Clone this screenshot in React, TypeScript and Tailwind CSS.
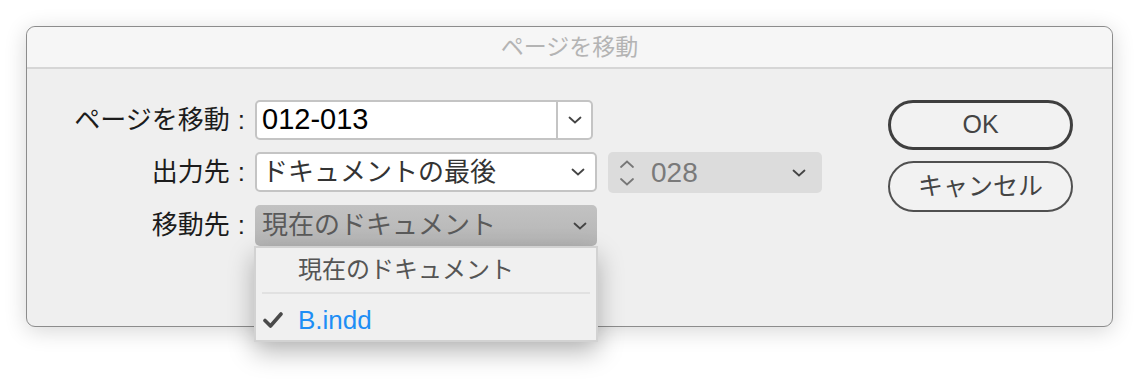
import React from "react";

const font = "font-['Liberation_Sans','Noto_Sans_CJK_JP',sans-serif]";

const Chevron: React.FC<{ className?: string }> = ({ className }) => (
  <svg width="14" height="8" viewBox="0 0 14 8" className={className}>
    <path d="M1.5 1.5 L7 6.5 L12.5 1.5" fill="none" stroke="#444" strokeWidth="1.8" strokeLinecap="round" />
  </svg>
);

const Stepper: React.FC = () => (
  <svg width="16" height="28" viewBox="0 0 16 28">
    <path d="M2 8 L8 2.5 L14 8" fill="none" stroke="#777" strokeWidth="1.8" strokeLinecap="round" />
    <path d="M2 20 L8 25.5 L14 20" fill="none" stroke="#777" strokeWidth="1.8" strokeLinecap="round" />
  </svg>
);

const Label: React.FC<{ text: string }> = ({ text }) => (
  <div className="flex h-[40px] items-center justify-end text-[26px] text-[#1c1c1c]">
    {text}
    <span className="ml-[8px]">:</span>
  </div>
);

const DropdownMenu: React.FC = () => (
  <div className="absolute left-[227px] top-[219px] w-[344px] h-[96px] bg-[#f0f0f0] border-2 border-[#d2d2d2] shadow-[0_10px_24px_rgba(0,0,0,0.28)]">
    <div className="flex h-[44px] items-center pl-[42px] text-[24px] text-[#555]">現在のドキュメント</div>
    <div className="mx-[6px] h-[2px] bg-[#e1e1e1]" />
    <div className="flex h-[46px] items-center pl-[7px] pt-[6px] text-[26px]">
      <svg width="20" height="16" viewBox="0 0 20 16" className="mr-[15px]">
        <path d="M2 8.5 L7.5 14 L18 2" fill="none" stroke="#4a4a4a" strokeWidth="3.6" strokeLinecap="round" strokeLinejoin="round" />
      </svg>
      <span className="text-[#1e8ef5]">B.indd</span>
    </div>
  </div>
);

export default function App() {
  return (
    <div className={`w-[1141px] h-[387px] bg-white pt-[26px] pl-[26px] ${font}`}>
      <div className="relative w-[1087px] h-[301px] rounded-[9px] border border-[#8c8c8c] bg-[#efefef] shadow-[0_4px_22px_rgba(0,0,0,0.16)]">
        <div className="flex h-[42px] items-center justify-center rounded-t-[9px] border-b-2 border-[#d6d6d6] bg-[#f6f6f6] text-[23px] text-[#b4b4b4]">
          ページを移動
        </div>
        <div className="flex pt-[31px]">
          <div className="grid grid-cols-[218px_auto] gap-x-[10px] gap-y-[12px]">
            <Label text="ページを移動" />
            <div className="flex h-[40px] w-[338px] rounded-[5px] border-2 border-[#c4c4c4] bg-white">
              <div className="flex flex-1 items-center pl-[5px] text-[29px] text-black">012-013</div>
              <div className="flex w-[35px] items-center justify-center border-l-2 border-[#c4c4c4]">
                <Chevron />
              </div>
            </div>

            <Label text="出力先" />
            <div className="flex gap-[11px]">
              <div className="flex h-[40px] w-[342px] items-center justify-between rounded-[5px] border-2 border-[#c4c4c4] bg-white pl-[5px] pr-[10px] text-[26px] text-[#333]">
                <span>ドキュメントの最後</span>
                <Chevron />
              </div>
              <div className="flex h-[41px] w-[214px] items-center rounded-[5px] bg-[#dcdcdc] pl-[11px] pr-[16px] text-[28px] text-[#7a7a7a]">
                <Stepper />
                <span className="ml-[16px] flex-1">028</span>
                <Chevron />
              </div>
            </div>

            <Label text="移動先" />
            <div className="flex h-[41px] w-[342px] items-center justify-between rounded-[5px] bg-gradient-to-b from-[#c2c2c2] to-[#b5b5b5] pl-[7px] pr-[10px] text-[26px] text-[#5a5a5a]">
              <span>現在のドキュメント</span>
              <Chevron />
            </div>
          </div>

          <div className="ml-[66px] flex flex-col gap-[11px]">
            <button className="h-[50px] w-[185px] rounded-full border-[3px] border-[#3f3f3f] bg-[#f2f2f2] text-[25px] text-[#444]">
              OK
            </button>
            <button className="h-[51px] w-[185px] rounded-full border-2 border-[#505050] bg-[#f2f2f2] text-[25px] text-[#444]">
              キャンセル
            </button>
          </div>
        </div>
        <DropdownMenu />
      </div>
    </div>
  );
}
